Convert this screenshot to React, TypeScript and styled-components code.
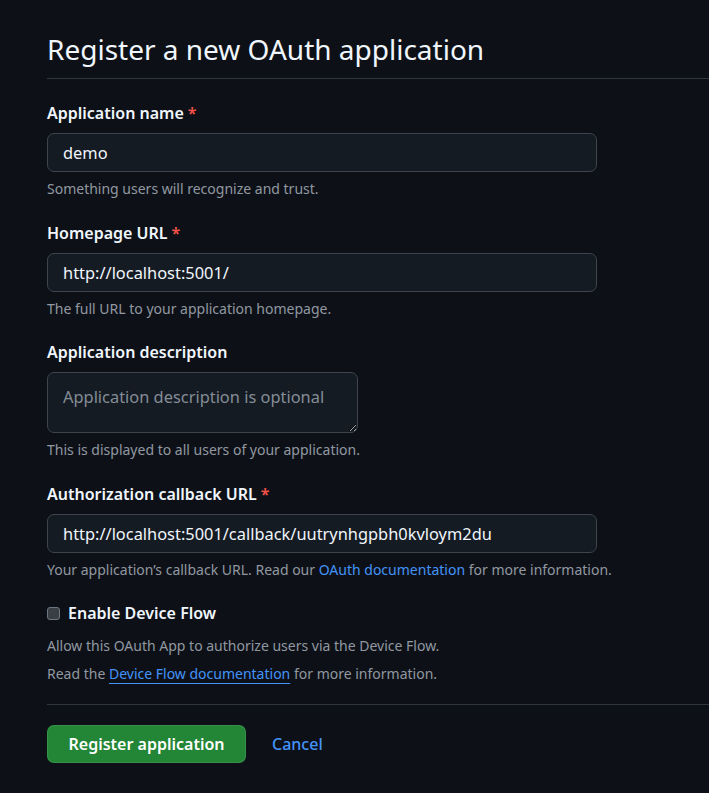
import React from "react";
import styled, { createGlobalStyle } from "styled-components";

const Global = createGlobalStyle`
  html, body { margin: 0; padding: 0; background: #0d1117; overflow: hidden; }
  body { font-family: "Noto Sans", "Segoe UI", sans-serif; color: #f0f6fc; }
  * { box-sizing: border-box; }
`;

const Page = styled.div`
  padding: 28px 0 0 47px;
  width: 100%;
`;

const Subhead = styled.div`
  border-bottom: 1px solid #30363d;
  padding-bottom: 8px;
  margin-bottom: 22px;
`;

const Heading = styled.h1`
  margin: 0;
  font-size: 28px;
  font-weight: 400;
  line-height: 42px;
  color: #f0f6fc;
`;

const Group = styled.div<{ $space?: number }>`
  display: flex;
  flex-direction: column;
  margin-bottom: ${(p) => p.$space ?? 21}px;
`;

const Label = styled.label`
  font-size: 16px;
  font-weight: 600;
  line-height: 24px;
  margin-bottom: 8px;
  color: #f0f6fc;
`;

const Required = styled.span`
  color: #f85149;
  margin-left: 4px;
`;

const TextInput = styled.input`
  width: 550px;
  height: 39px;
  padding: 0 15px;
  font-family: inherit;
  font-size: 16.4px;
  color: #f0f6fc;
  background: #151b23;
  border: 1px solid #3d444d;
  border-radius: 7px;
  outline: none;
`;

const TextArea = styled.textarea`
  width: 311px;
  height: 61px;
  padding: 12px 15px 8px;
  font-family: inherit;
  font-size: 16.4px;
  line-height: 24px;
  color: #f0f6fc;
  background: #151b23;
  border: 1px solid #3d444d;
  border-radius: 7px;
  outline: none;
  resize: both;
  &::placeholder { color: #848d97; }
`;

const Note = styled.p`
  margin: 6px 0 0;
  font-size: 14px;
  line-height: 22px;
  color: #9198a1;
`;

const Link = styled.a<{ $underline?: boolean }>`
  color: #4493f8;
  text-decoration: ${(p) => (p.$underline ? "underline" : "none")};
  text-underline-offset: 4px;
`;

const CheckRow = styled.label`
  display: flex;
  align-items: center;
  gap: 8px;
  font-size: 16px;
  font-weight: 600;
  line-height: 24px;
  color: #f0f6fc;
`;

const Check = styled.input`
  appearance: none;
  margin: 0;
  width: 13px;
  height: 13px;
  border-radius: 3px;
  background: #3a3f46;
  border: 1px solid #6e7681;
`;

const DeviceNotes = styled.div`
  padding-top: 10px;
  padding-bottom: 19px;
  border-bottom: 1px solid #30363d;
  margin-bottom: 20px;
  display: flex;
  flex-direction: column;
  gap: 6px;
`;

const PlainNote = styled.p`
  margin: 0;
  font-size: 14px;
  line-height: 22px;
  color: #9198a1;
`;

const Actions = styled.div`
  display: flex;
  align-items: center;
  gap: 26px;
`;

const PrimaryButton = styled.button`
  height: 38px;
  width: 199px;
  padding: 0 20px;
  font-family: inherit;
  font-size: 16px;
  font-weight: 600;
  color: #ffffff;
  background: #238636;
  border: 1px solid rgba(240, 246, 252, 0.1);
  border-radius: 7px;
`;

const CancelLink = styled.a`
  font-size: 16px;
  font-weight: 500;
  color: #4493f8;
  text-decoration: none;
`;

export default function App() {
  return (
    <>
      <Global />
      <Page>
        <Subhead>
          <Heading>Register a new OAuth application</Heading>
        </Subhead>

        <Group>
          <Label>
            Application name<Required>*</Required>
          </Label>
          <TextInput defaultValue="demo" />
          <Note>Something users will recognize and trust.</Note>
        </Group>

        <Group $space={20}>
          <Label>
            Homepage URL<Required>*</Required>
          </Label>
          <TextInput defaultValue="http://localhost:5001/" />
          <Note>The full URL to your application homepage.</Note>
        </Group>

        <Group>
          <Label>Application description</Label>
          <TextArea placeholder="Application description is optional" />
          <Note>This is displayed to all users of your application.</Note>
        </Group>

        <Group $space={20}>
          <Label>
            Authorization callback URL<Required>*</Required>
          </Label>
          <TextInput defaultValue="http://localhost:5001/callback/uutrynhgpbh0kvloym2du" />
          <Note>
            Your application’s callback URL. Read our{" "}
            <Link href="#">OAuth documentation</Link> for more information.
          </Note>
        </Group>

        <CheckRow>
          <Check type="checkbox" />
          Enable Device Flow
        </CheckRow>
        <DeviceNotes>
          <PlainNote>Allow this OAuth App to authorize users via the Device Flow.</PlainNote>
          <PlainNote>
            Read the <Link href="#" $underline>Device Flow documentation</Link> for more information.
          </PlainNote>
        </DeviceNotes>

        <Actions>
          <PrimaryButton>Register application</PrimaryButton>
          <CancelLink href="#">Cancel</CancelLink>
        </Actions>
      </Page>
    </>
  );
}
